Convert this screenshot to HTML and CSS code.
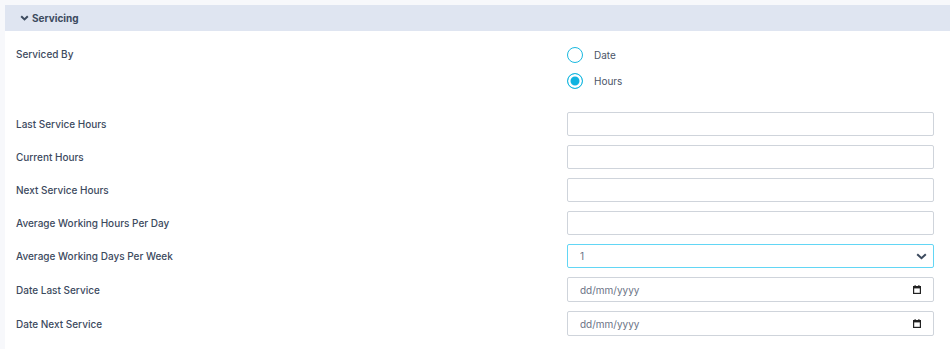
FILE: index.html
```html
<!DOCTYPE html>
<html lang="en">
<head>
    <meta charset="UTF-8">
    <meta name="viewport" content="width=device-width, initial-scale=1.0">
    <title>Servicing</title>
    <link rel="stylesheet" href="styles.css">
</head>
<body>
    <div class="panel">
        <div class="panel-header">
            <svg class="chevron" width="9" height="6" viewBox="0 0 9 6"><path d="M1.2 1.2 L4.5 4.4 L7.8 1.2" fill="none" stroke="#3c4a5e" stroke-width="2"/></svg>
            <span>Servicing</span>
        </div>
        <div class="panel-body">
            <div class="row row-top">
                <label class="label">Serviced By</label>
                <div class="radios">
                    <label class="radio"><input type="radio" name="servicedBy" value="date"><span>Date</span></label>
                    <label class="radio"><input type="radio" name="servicedBy" value="hours" checked><span>Hours</span></label>
                </div>
            </div>
            <div class="fields">
                <div class="row">
                    <label class="label">Last Service Hours</label>
                    <input class="field" type="text">
                </div>
                <div class="row">
                    <label class="label">Current Hours</label>
                    <input class="field" type="text">
                </div>
                <div class="row">
                    <label class="label">Next Service Hours</label>
                    <input class="field" type="text">
                </div>
                <div class="row">
                    <label class="label">Average Working Hours Per Day</label>
                    <input class="field" type="text">
                </div>
                <div class="row">
                    <label class="label">Average Working Days Per Week</label>
                    <div class="field field-select">
                        <select>
                            <option>1</option>
                            <option>2</option>
                            <option>3</option>
                            <option>4</option>
                            <option>5</option>
                            <option>6</option>
                            <option>7</option>
                        </select>
                        <svg width="11" height="7" viewBox="0 0 11 7"><path d="M1.2 1.2 L5.5 5.2 L9.8 1.2" fill="none" stroke="#3c4a5e" stroke-width="2"/></svg>
                    </div>
                </div>
                <div class="row">
                    <label class="label">Date Last Service</label>
                    <div class="field field-date">
                        <input type="text" placeholder="dd/mm/yyyy">
                        <svg width="8" height="9" viewBox="0 0 8 9"><rect x="0.6" y="1.6" width="6.8" height="6.8" fill="none" stroke="#222" stroke-width="1.2"/><rect x="0.6" y="1.6" width="6.8" height="1.8" fill="#222"/><rect x="1.6" y="0" width="1" height="2" fill="#222"/><rect x="5.4" y="0" width="1" height="2" fill="#222"/></svg>
                    </div>
                </div>
                <div class="row">
                    <label class="label">Date Next Service</label>
                    <div class="field field-date">
                        <input type="text" placeholder="dd/mm/yyyy">
                        <svg width="8" height="9" viewBox="0 0 8 9"><rect x="0.6" y="1.6" width="6.8" height="6.8" fill="none" stroke="#222" stroke-width="1.2"/><rect x="0.6" y="1.6" width="6.8" height="1.8" fill="#222"/><rect x="1.6" y="0" width="1" height="2" fill="#222"/><rect x="5.4" y="0" width="1" height="2" fill="#222"/></svg>
                    </div>
                </div>
            </div>
        </div>
    </div>
</body>
</html>
```

FILE: styles.css
```css
html, body {
    height: 100%;
}
body {
    margin: 0;
    padding: 5px 0 0 5px;
    box-sizing: border-box;
    background-color: #f7f8fb;
    font-family: Inter, "Noto Sans", sans-serif;
    font-size: 10px;
    color: #3c4a5e;
    overflow: hidden;
}
.panel {
    background: #fff;
    min-height: 100%;
}
.panel-header {
    height: 26px;
    background-color: #dfe5f1;
    display: flex;
    align-items: center;
    padding-left: 15px;
    font-weight: 700;
    font-size: 10px;
    color: #3c4a5e;
}
.chevron {
    margin-right: 3px;
}
.panel-body {
    padding: 14px 16px 0 11px;
}
.row {
    display: flex;
    align-items: center;
}
.row-top {
    align-items: flex-start;
    margin-bottom: 21px;
}
.row-top .label {
    padding-top: 3px;
}
.label {
    width: 551px;
    flex-shrink: 0;
    font-weight: 500;
    color: #3c4a5e;
}
.radios {
    display: flex;
    flex-direction: column;
    gap: 6px;
}
.radio {
    display: flex;
    align-items: center;
    height: 20px;
    color: #4b5568;
}
.radio input {
    appearance: none;
    width: 16px;
    height: 16px;
    margin: 0 11px 0 0;
    border: 1.5px solid #1ab9e0;
    border-radius: 50%;
    box-sizing: border-box;
}
.radio input:checked {
    background: #0fb3e0;
    box-shadow: inset 0 0 0 2.5px #fff;
}
.fields {
    display: flex;
    flex-direction: column;
    gap: 9px;
}
.field {
    flex: 1;
    height: 24px;
    box-sizing: border-box;
    border: 1px solid #cfd4db;
    border-radius: 2px;
    background: #fff;
    font-family: inherit;
    font-size: 10px;
    color: #3c4a5e;
    padding: 0 12px;
    margin: 0;
}
.field-select {
    display: flex;
    align-items: center;
    border-color: #62d6f5;
    padding-right: 6px;
}
.field-select select {
    appearance: none;
    flex: 1;
    border: none;
    outline: none;
    background: transparent;
    font-family: inherit;
    font-size: 10px;
    color: #6b7385;
    padding: 0;
}
.field-date {
    display: flex;
    align-items: center;
    height: 25px;
    padding-right: 12px;
}
.field-date input {
    flex: 1;
    border: none;
    outline: none;
    font-family: inherit;
    font-size: 10px;
    padding: 0;
    color: #3c4a5e;
}
.field-date input::placeholder {
    color: #6b7385;
}
```
